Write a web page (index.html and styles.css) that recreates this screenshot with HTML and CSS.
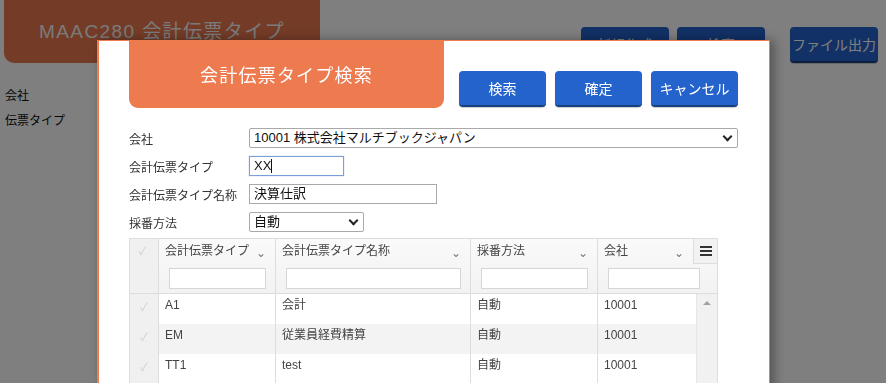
FILE: index.html
```html
<!DOCTYPE html>
<html lang="ja">
<head>
  <meta charset="UTF-8" />
  <title>MAAC280 会計伝票タイプ</title>
  <link rel="stylesheet" href="styles.css">
</head>
<body>
  <div class="page">
    <header>
      <div class="page-title">MAAC280 会計伝票タイプ</div>
      <div class="page-actions">
        <button class="btn">新規作成</button>
        <button class="btn">検索</button>
        <button class="btn btn-wide">ファイル出力</button>
      </div>
    </header>
    <div class="page-form">
      <div>会社</div>
      <div>伝票タイプ</div>
    </div>
  </div>

  <div class="overlay"></div>

  <div class="modal">
    <div class="modal-head">
      <div class="modal-title">会計伝票タイプ検索</div>
      <div class="modal-buttons">
        <button class="btn">検索</button>
        <button class="btn">確定</button>
        <button class="btn">キャンセル</button>
      </div>
    </div>

    <div class="modal-form">
      <div class="form-row">
        <label>会社</label>
        <div class="select select-company">10001 株式会社マルチブックジャパン<span class="chev"></span></div>
      </div>
      <div class="form-row">
        <label>会計伝票タイプ</label>
        <div class="input input-code focused">XX<span class="caret"></span></div>
      </div>
      <div class="form-row">
        <label>会計伝票タイプ名称</label>
        <div class="input input-name">決算仕訳</div>
      </div>
      <div class="form-row">
        <label>採番方法</label>
        <div class="select select-method">自動<span class="chev"></span></div>
      </div>
    </div>

    <div class="grid">
      <div class="grid-head">
        <div class="cell check">✓</div>
        <div class="cell col1"><div class="head-title">会計伝票タイプ<span class="sort">⌄</span></div><div class="filter"></div></div>
        <div class="cell col2"><div class="head-title">会計伝票タイプ名称<span class="sort">⌄</span></div><div class="filter"></div></div>
        <div class="cell col3"><div class="head-title">採番方法<span class="sort">⌄</span></div><div class="filter"></div></div>
        <div class="cell col4"><div class="head-title">会社<span class="sort">⌄</span></div><div class="filter"></div></div>
        <div class="menu-btn"><span></span><span></span><span></span></div>
      </div>
      <div class="grid-body">
        <div class="rows">
          <div class="row">
            <div class="cell check">✓</div>
            <div class="cell col1">A1</div>
            <div class="cell col2">会計</div>
            <div class="cell col3">自動</div>
            <div class="cell col4">10001</div>
          </div>
          <div class="row alt">
            <div class="cell check">✓</div>
            <div class="cell col1">EM</div>
            <div class="cell col2">従業員経費精算</div>
            <div class="cell col3">自動</div>
            <div class="cell col4">10001</div>
          </div>
          <div class="row">
            <div class="cell check">✓</div>
            <div class="cell col1">TT1</div>
            <div class="cell col2">test</div>
            <div class="cell col3">自動</div>
            <div class="cell col4">10001</div>
          </div>
        </div>
        <div class="scrollbar"><span class="arrow-up"></span></div>
      </div>
    </div>
  </div>
</body>
</html>
```

FILE: styles.css
```css
body {
  margin: 0;
  font-family: "Liberation Sans", "Noto Sans CJK JP", sans-serif;
  background: #fff;
  color: #333;
  overflow: hidden;
}
button {
  font-family: inherit;
}

/* page behind the dialog */
header {
  display: flex;
  align-items: flex-start;
}
.page-title {
  width: 316px;
  height: 63px;
  margin-left: 4px;
  background: #e8784f;
  border-radius: 0 0 10px 10px;
  color: #f4f4f4;
  font-size: 19px;
  letter-spacing: 1.4px;
  display: flex;
  align-items: center;
  justify-content: center;
  padding-bottom: 4px;
  box-sizing: border-box;
}
.page-actions {
  display: flex;
  gap: 8px;
  margin-left: 261px;
  margin-top: 27px;
}
.page-actions .btn {
  width: 88px;
}
.page-actions .btn-wide {
  margin-left: 17px;
}
.page-form {
  padding: 21px 0 0 5px;
  font-size: 12px;
  color: #111;
  line-height: 25px;
}

.overlay {
  position: fixed;
  inset: 0;
  background: rgba(0, 0, 0, 0.5);
}

.btn {
  height: 36px;
  background: #2563cc;
  color: #fff;
  border: none;
  border-bottom: 2px solid #17407f;
  border-radius: 4px;
  font-size: 14px;
  padding: 0;
  box-shadow: 0 1px 1px rgba(0,0,0,0.2);
}

/* dialog */
.modal {
  position: absolute;
  left: 97px;
  top: 40px;
  width: 670px;
  height: 380px;
  background: #fff;
  border: 1px solid #ef7b4f;
  border-left-width: 2px;
  box-shadow: 4px 0 10px rgba(0,0,0,0.35);
}
.modal-head {
  display: flex;
  align-items: flex-start;
}
.modal-title {
  width: 315px;
  height: 67px;
  margin-left: 30px;
  background: #ee7a4f;
  border-radius: 0 0 9px 9px;
  color: #fff;
  font-size: 18px;
  letter-spacing: 1.2px;
  display: flex;
  align-items: center;
  justify-content: center;
  padding-bottom: 2px;
  box-sizing: border-box;
}
.modal-buttons {
  display: flex;
  gap: 9px;
  margin-left: 15px;
  margin-top: 30px;
}
.modal-buttons .btn {
  width: 87px;
}

.modal-form {
  padding: 20px 0 0 30px;
  display: flex;
  flex-direction: column;
  gap: 8px;
}
.form-row {
  display: flex;
  align-items: center;
  height: 20px;
}
.form-row label {
  width: 120px;
  font-size: 12px;
  color: #333;
}
.select, .input {
  height: 20px;
  box-sizing: border-box;
  border: 1px solid #a9a9a9;
  font-size: 13px;
  color: #111;
  padding: 0 4px;
  line-height: 18px;
  display: flex;
  align-items: center;
  position: relative;
  background: #fff;
}
.select {
  border-radius: 2px;
}
.select-company {
  width: 489px;
}
.select-method {
  width: 115px;
}
.input-code {
  width: 95px;
}
.input-name {
  width: 188px;
}
.focused {
  border-color: #7a9fd6;
  box-shadow: 0 0 1px #9ab8e6;
}
.caret {
  display: inline-block;
  width: 1px;
  height: 14px;
  background: #111;
}
.chev {
  position: absolute;
  right: 6px;
  top: 4px;
  width: 5px;
  height: 5px;
  border-right: 2px solid #222;
  border-bottom: 2px solid #222;
  transform: rotate(45deg);
}

/* grid */
.grid {
  margin: 6px 0 0 30px;
  width: 587px;
  border: 1px solid #ddd;
  border-bottom: none;
  font-size: 12px;
  color: #444;
}
.grid-head {
  display: flex;
  height: 54px;
  background: linear-gradient(#fafafa, #f2f2f2);
  border-bottom: 1px solid #ddd;
}
.cell {
  box-sizing: border-box;
  border-right: 1px solid #ddd;
  line-height: 16px;
}
.cell.check {
  width: 29px;
  background: #f0f0f0;
  color: #cfcfcf;
  font-size: 11px;
  text-align: center;
  padding: 4px 0 0;
}
.col1 { width: 117px; }
.col2 { width: 195px; }
.col3 { width: 127px; }
.col4 { width: 94px; border-right: none; }
.grid-head .col4 { width: 95px; }
.grid-head .cell {
  padding: 4px 9px 0 6px;
}
.head-title {
  display: flex;
  justify-content: space-between;
  height: 25px;
  color: #444;
}
.sort {
  font-size: 12px;
  color: #777;
  margin-top: 2px;
}
.filter {
  height: 19px;
  margin-left: 4px;
  border: 1px solid #d6d6d6;
  background: #fff;
}
.col4 .filter {
  margin-right: -16px;
}
.menu-btn {
  width: 24px;
  height: 25px;
  background: #f2f2f2;
  border-left: 1px solid #ddd;
  border-bottom: 1px solid #ddd;
  box-sizing: border-box;
  display: flex;
  flex-direction: column;
  align-items: center;
  justify-content: center;
  gap: 2px;
}
.menu-btn span {
  width: 12px;
  height: 2px;
  background: #333;
}
.grid-body {
  display: flex;
}
.rows {
  flex: 1;
}
.row {
  display: flex;
  height: 30px;
  background: #fff;
}
.row.alt {
  background: #f3f3f3;
}
.row .cell {
  padding: 3px 0 0 6px;
  color: #444;
}
.row .cell.check {
  padding: 5px 0 0;
  color: #cfcfcf;
}
.scrollbar {
  width: 20px;
  background: #f1f1f1;
  border-left: 1px solid #e6e6e6;
  position: relative;
}
.arrow-up {
  position: absolute;
  left: 6px;
  top: 7px;
  border-left: 4px solid transparent;
  border-right: 4px solid transparent;
  border-bottom: 4px solid #a3a3a3;
}
```
